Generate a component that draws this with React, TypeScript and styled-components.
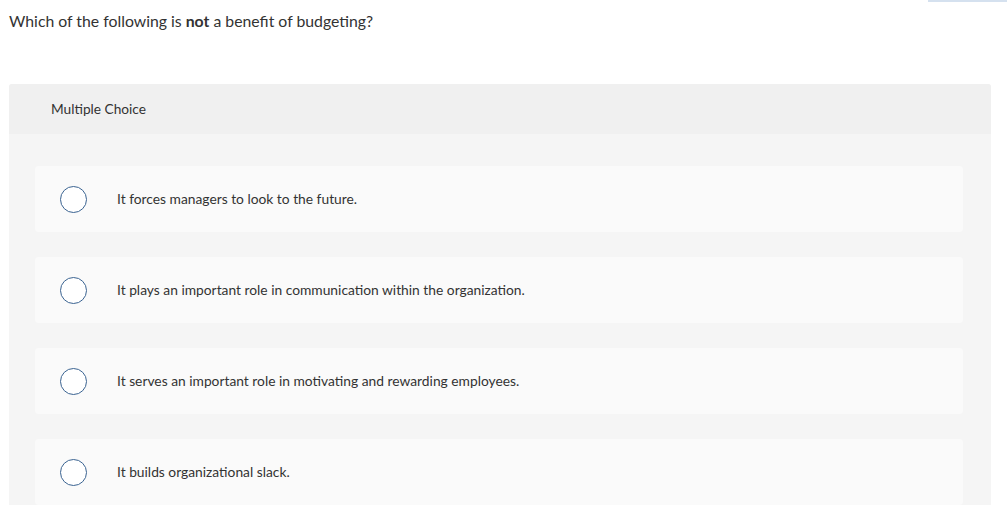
import React from "react";
import styled, { createGlobalStyle } from "styled-components";

const GlobalStyle = createGlobalStyle`
	html, body {
		margin: 0;
		padding: 0;
		background: #ffffff;
	}
	body {
		font-family: "Lato", "Open Sans", "Liberation Sans", sans-serif;
		color: #333333;
	}
`;

const OPTIONS = [
	"It forces managers to look to the future.",
	"It plays an important role in communication within the organization.",
	"It serves an important role in motivating and rewarding employees.",
	"It builds organizational slack.",
];

const App = () => {
	return (
		<Page>
			<GlobalStyle />
			<TopBar />
			<Question>
				Which of the following is <b>not</b> a benefit of budgeting?
			</Question>
			<Panel>
				<PanelHeader>Multiple Choice</PanelHeader>
				<OptionList>
					{OPTIONS.map((text, idx) => (
						<OptionCard key={idx}>
							<Radio />
							<OptionText>{text}</OptionText>
						</OptionCard>
					))}
				</OptionList>
			</Panel>
		</Page>
	);
};

export default App;

const Page = styled.div`
	position: relative;
	width: 1007px;
	height: 505px;
	overflow: hidden;
	padding: 0 16px 0 9px;
	box-sizing: border-box;
`;

const TopBar = styled.div`
	position: absolute;
	top: 0;
	right: 0;
	width: 79px;
	height: 2px;
	background: #d5e1ef;
`;

const Question = styled.div`
	padding-top: 11px;
	font-size: 15.8px;
	line-height: 19px;
	color: #333333;
	b {
		font-weight: 700;
	}
`;

const Panel = styled.div`
	margin-top: 54px;
	background: #f5f5f5;
	border-radius: 3px 3px 0 0;
`;

const PanelHeader = styled.div`
	height: 50px;
	box-sizing: border-box;
	display: flex;
	align-items: center;
	padding: 0 0 2px 42px;
	background: #f0f0f0;
	border-radius: 3px 3px 0 0;
	font-size: 13.7px;
	color: #333333;
`;

const OptionList = styled.div`
	display: flex;
	flex-direction: column;
	gap: 25px;
	padding: 32px 28px 40px 26px;
`;

const OptionCard = styled.div`
	height: 66px;
	display: flex;
	align-items: center;
	padding-left: 25px;
	background: #fafafa;
	border-radius: 4px;
`;

const Radio = styled.div`
	width: 25px;
	height: 25px;
	border: 1.5px solid #3a6391;
	border-radius: 50%;
	background: #ffffff;
	flex-shrink: 0;
`;

const OptionText = styled.div`
	margin-left: 30px;
	padding-bottom: 2px;
	font-size: 13.8px;
	color: #333333;
`;
